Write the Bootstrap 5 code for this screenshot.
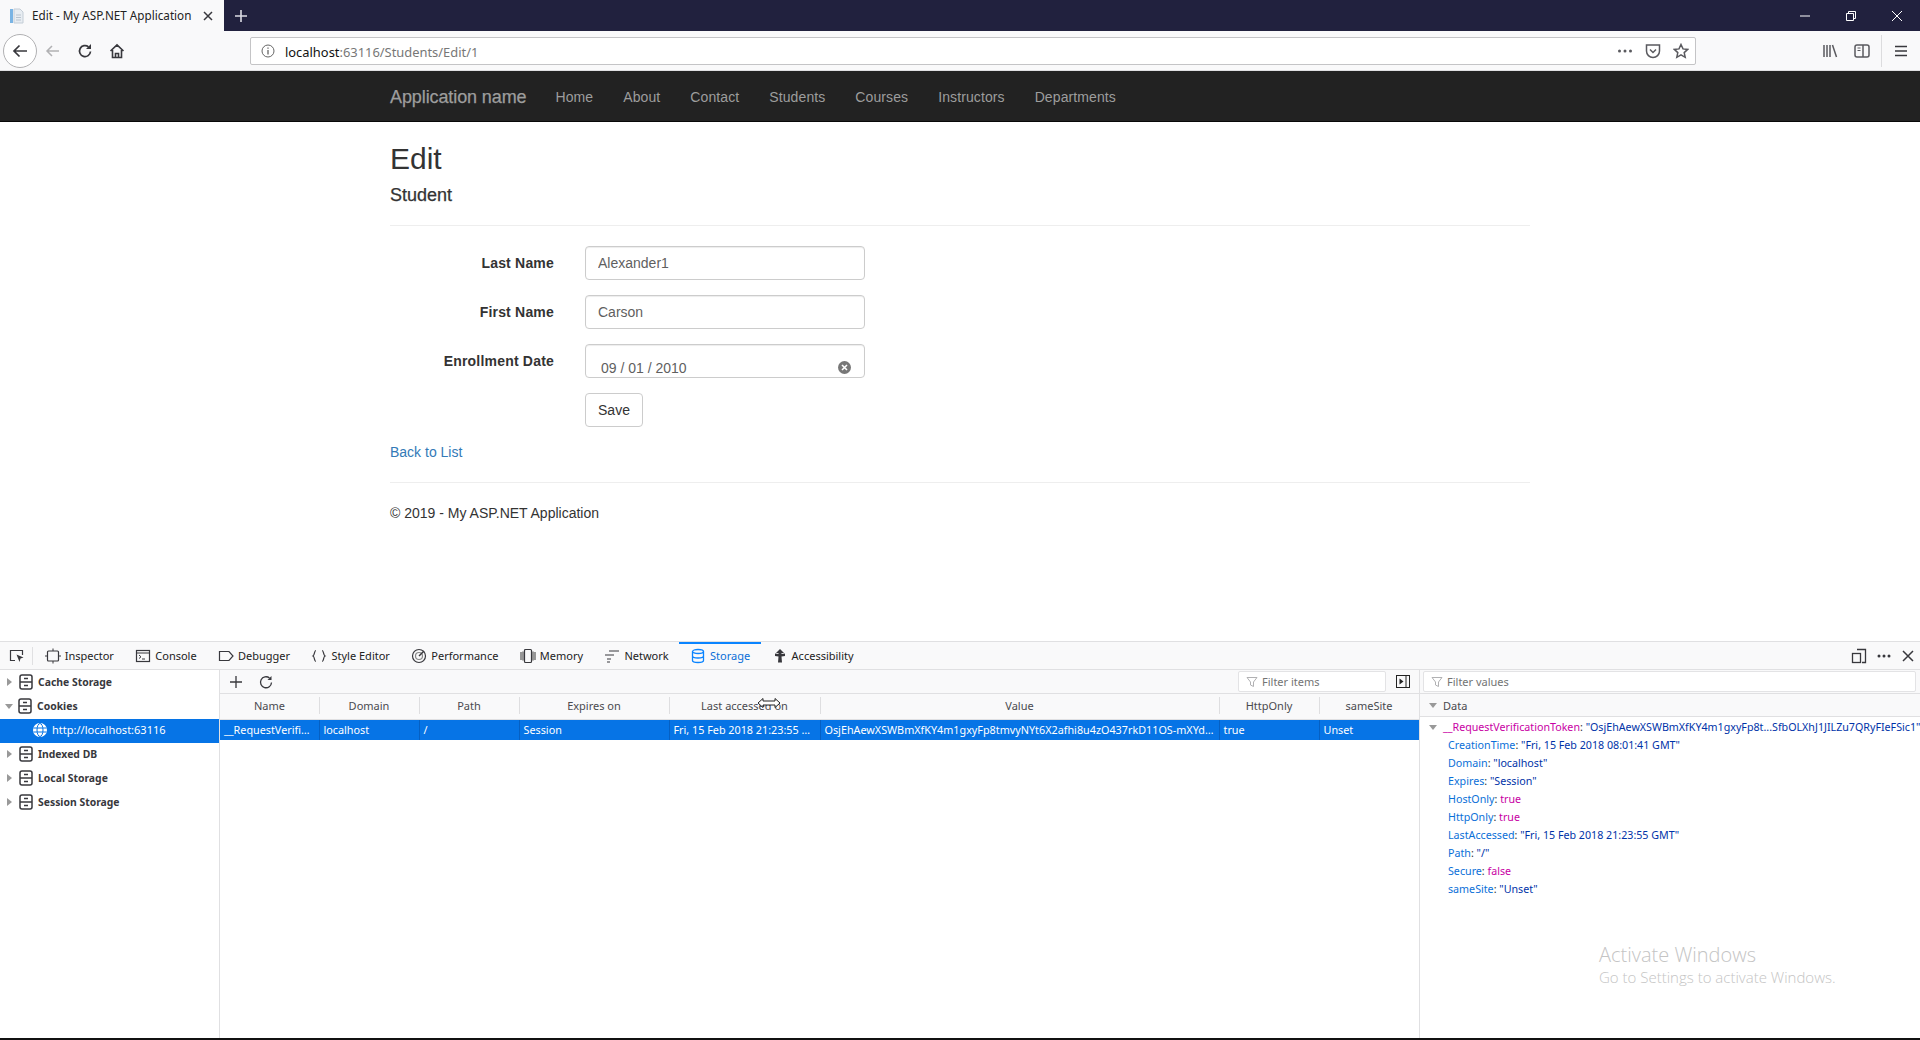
<!DOCTYPE html>
<html lang="en">
<head>
<meta charset="utf-8">
<title>Edit - My ASP.NET Application</title>
<link rel="stylesheet" href="https://cdn.jsdelivr.net/npm/bootstrap@5.3.0/dist/css/bootstrap.min.css">
<style>
html,body{height:100%}
body{width:1920px;height:1040px;overflow:hidden;font-family:"Liberation Sans",Arial,sans-serif;font-size:14px;line-height:20px;color:#333;background:#fff;display:flex;flex-direction:column;position:relative}
svg{display:block;flex:none}
.ui{font-family:"Noto Sans",sans-serif}
.titlebar{height:31px;background:#21213e;flex:none}
.browsertab{width:224px;background:#f9f9fa;color:#222;font-size:11.7px;padding:0 11px 0 9px}
.tabtitle{margin-left:7px;flex:1;white-space:nowrap;padding-bottom:2px}
.newtab{margin-left:9px}
.winbtns{margin-left:auto}
.winbtn{width:46px;height:31px}
.toolbar{height:40px;background:#f9f9fa;flex:none;border-bottom:1px solid #e0e0e2}
.tbbtn{width:32px;height:40px}
.backbtn{width:34px;height:34px;border:1px solid #b1b1b3;border-radius:50%;background:#fff;margin:0 0 0 3px}
.urlbar{width:1446px;height:28px;margin-left:117px;background:#fff;border:1px solid #c4c4c6;border-radius:2px;padding:0 0 0 10px;font-size:12.9px}
.urltext{padding-top:2px;margin-left:10px}
.urlhost{color:#111}
.urlrest{color:#777}
.urlact{width:28px;height:26px}
.tbright{margin-left:auto;padding-right:3px}
.tbdiv{width:1px;height:32px;background:#dcdcde;margin:0 3px}
.sitenav{height:51px;background:#222;border-bottom:1px solid #080808;padding:0;flex:none}
.sitewrap{width:1170px;margin:0 auto;padding:0 15px}
.sitenav .navbar-brand{font-size:18px;line-height:20px;color:#9d9d9d;padding:16px 0 15px;margin:0 14px 0 0;font-weight:400;letter-spacing:-.1px;-webkit-text-stroke:.25px #9d9d9d}
.sitenav .navbar-nav .nav-link{color:#9d9d9d;padding:16px 15px 15px;line-height:20px;font-size:14px;letter-spacing:.1px}
.webpage{height:519px;flex:none;overflow:hidden}
.pagetitle{font-size:30px;line-height:33px;margin:20px 0 10px;font-weight:500;color:#333}
.pagesub{font-size:18px;line-height:20px;margin:10px 0;font-weight:500;color:#333;-webkit-text-stroke:.25px #333}
.pagerule{border:0;border-top:1px solid #eee;opacity:1;margin:20px 0}
.fieldrow{margin-bottom:15px}
.fieldlabel{width:164px;margin:0 31px 0 0;text-align:right;font-weight:700;padding-top:7px;line-height:20px;font-size:14px;letter-spacing:.2px}
.fieldbox{width:280px;position:relative}
.fieldbox .form-control{height:34px;font-size:14px;line-height:20px;padding:6px 12px;border:1px solid #ccc;border-radius:4px;color:#5f5f5f;box-shadow:inset 0 1px 1px rgba(0,0,0,.075)}
.fieldbox .datectl{padding:13px 15px 0}
.dateclear{position:absolute;right:14px;top:17px}
.savebtn{margin-left:195px;height:34px;width:58px;font-size:14px;line-height:20px;padding:6px 12px;color:#333;background:#fff;border:1px solid #ccc;border-radius:4px}
.backlink{color:#337ab7;text-decoration:none}
.pagefoot{margin:0 0 10px}
.devtools{height:397px;flex:none;background:#fff;border-top:1px solid #e0e0e2;display:flex;flex-direction:column;font-size:11px;line-height:16px;color:#333}
.devtabs{height:28px;background:#f9f9fa;border-bottom:1px solid #e0e0e2;flex:none;color:#222}
.pickbtn{width:34px;height:27px;position:relative;padding-left:9px}
.pickbtn::after{content:"";position:absolute;right:1px;top:5px;height:18px;width:1px;background:#e0e0e2}
.devtab{height:27px;padding:0 10.7px;gap:4px;white-space:nowrap}
.devtab.on{color:#0a6fd8;border-top:2px solid #0a84ff;padding-bottom:2px}
.devright{margin-left:auto;gap:6px;padding-right:5px}
.devbody{flex:1;min-height:0}
.storetree{width:220px;border-right:1px solid #e0e0e2;flex:none;padding-top:1px}
.treerow{height:24px;font-weight:700;color:#38383d;font-size:10.4px;white-space:nowrap;padding:0 0 2px 5px;gap:4px}
.treerow>i{margin-right:2px}
.treerow.sel{background:#0674e6;color:#fff;font-weight:400;padding-left:32px;font-size:11px;gap:4px}
.twist{width:0;height:0;border-left:5px solid #999;border-top:4.5px solid transparent;border-bottom:4.5px solid transparent;margin:0 2px 0 2px}
.twist.open{border-left:4.5px solid transparent;border-right:4.5px solid transparent;border-top:5px solid #999;border-bottom:0;margin:0}
.tablepane{width:1200px;flex:none;border-right:1px solid #e0e0e2}
.tools{height:24px;background:#f9f9fa;border-bottom:1px solid #e0e0e2;padding-left:9px;gap:12px}
.filterbox{height:21px;background:#fff;border:1px solid #e3e3e5;border-radius:2px;color:#737373;font-size:11px;gap:4px;padding-left:7px}
.filteritems{width:148px;margin-left:auto}
.expandbtn{margin-right:9px;margin-left:-2px}
.cooktable{table-layout:fixed;width:1199px;margin:0;--bs-table-bg:transparent;font-size:11px;line-height:16px}
.cooktable th,.cooktable td{padding:0 4px;white-space:nowrap;overflow:hidden;text-overflow:ellipsis;border:0;font-weight:400;vertical-align:middle}
.cooktable th{height:25px;text-align:center;background:#f9f9fa;color:#4a4a4f;border-bottom:1px solid #e0e0e2;position:relative}
.cooktable th+th::before{content:"";position:absolute;left:0;top:3px;height:17px;width:1px;background:#dedee0}
.cooktable td{height:21px;background:#0674e6;color:#fff;border-left:1px solid #0560c4;font-size:10.8px}
.cooktable td:first-child{border-left:0}
.c1{width:99px}.c2,.c3,.c7,.c8{width:100px}.c4{width:150px}.c5{width:151px}.c6{width:399px}
.datapane{flex:1;min-width:0;position:relative;font-size:10.7px}
.paneltop{height:24px;background:#f9f9fa;border-bottom:1px solid #e0e0e2;padding:0 4px 0 3px}
.paneltop .filterbox{flex:1}
.datahead{height:23px;background:#f9f9fa;border-bottom:1px solid #e0e0e2;padding:1px 0 0 9px;gap:6px;font-size:11px;color:#4a4a4f}
.tokenrow{height:20px;padding-left:9px;gap:6px;white-space:nowrap}
.tokenrow>i{margin-right:-2px}
.proprow{height:18px;padding-left:28px;white-space:nowrap}
.pkey{color:#0a6fd8}
.pkeym{color:#c800a4}
.pstr{color:#0033a8}
.pbool{color:#c800a4}
.activate{position:absolute;left:1599px;top:942px;color:#c4c4c4;font-family:"Open Sans",sans-serif;font-weight:300;pointer-events:none}
.activate1{font-size:20px;line-height:26px}
.activate2{font-size:15px;line-height:18px}
.resizecursor{position:absolute;left:757px;top:697px}
.endbar{height:2px;background:#111;flex:none}
</style>
</head>
<body>
<svg width="0" height="0" style="position:absolute">
<symbol id="stor" viewBox="0 0 16 16"><rect x="2" y="1" width="12" height="14" rx="2" fill="none" stroke="#38383d" stroke-width="1.5"/><path d="M2 8h12M6 4.500h4M6 11.500h4" stroke="#38383d" stroke-width="1.300" fill="none"/></symbol>
<symbol id="funnel" viewBox="0 0 12 12"><path d="M1 1.500h10L7.500 6v4.500l-3-1.500V6z" fill="none" stroke="#b1b1b3"/></symbol>
</svg>

<div class="titlebar d-flex ui">
  <div class="browsertab d-flex align-items-center">
    <svg width="16" height="16" viewBox="0 0 16 16"><rect x="1" y="1" width="3" height="14" fill="#7ab4e4"/><path d="M5 1h6l3 3v11H5z" fill="#e8edf2" stroke="#c4cdd6"/><path d="M7 7h5M7 9.500h5M7 12h5" stroke="#b9c4cf"/></svg>
    <span class="tabtitle">Edit - My ASP.NET Application</span>
    <svg width="10" height="10" viewBox="0 0 10 10"><path d="M1 1l8 8M9 1l-8 8" stroke="#38383d" stroke-width="1.500"/></svg>
  </div>
  <svg class="newtab align-self-center" width="16" height="16" viewBox="0 0 16 16"><path d="M8 2v12M2 8h12" stroke="#dcdce4" stroke-width="1.600"/></svg>
  <div class="winbtns d-flex">
    <div class="winbtn d-flex align-items-center justify-content-center"><svg width="12" height="12" viewBox="0 0 12 12"><path d="M1 6h10" stroke="#fff"/></svg></div>
    <div class="winbtn d-flex align-items-center justify-content-center"><svg width="12" height="12" viewBox="0 0 12 12"><path d="M1.500 3.500h7v7h-7zM3.500 3.500v-2h7v7h-2" fill="none" stroke="#fff"/></svg></div>
    <div class="winbtn d-flex align-items-center justify-content-center"><svg width="12" height="12" viewBox="0 0 12 12"><path d="M1 1l10 10M11 1L1 11" stroke="#fff"/></svg></div>
  </div>
</div>

<div class="toolbar d-flex align-items-center ui">
  <div class="backbtn d-flex align-items-center justify-content-center"><svg width="18" height="18" viewBox="0 0 18 18"><path d="M16 9H3M8.500 3.500L3 9l5.500 5.500" fill="none" stroke="#38383d" stroke-width="1.700"/></svg></div>
  <div class="tbbtn d-flex align-items-center justify-content-center"><svg width="16" height="16" viewBox="0 0 16 16"><path d="M14 8H2M7 3L2 8l5 5" fill="none" stroke="#b1b1b3" stroke-width="1.500"/></svg></div>
  <div class="tbbtn d-flex align-items-center justify-content-center"><svg width="16" height="16" viewBox="0 0 16 16"><path d="M13.500 8.500A5.500 5.500 0 1 1 11.500 3.800" fill="none" stroke="#38383d" stroke-width="1.700"/><path d="M14 1v5H9z" fill="#38383d"/></svg></div>
  <div class="tbbtn d-flex align-items-center justify-content-center"><svg width="16" height="16" viewBox="0 0 16 16"><path d="M1.500 8L8 1.800 14.500 8M3.500 7v7.500h9V7M6.500 14.500v-4h3v4" fill="none" stroke="#38383d" stroke-width="1.600"/></svg></div>
  <div class="urlbar d-flex align-items-center">
    <svg width="14" height="14" viewBox="0 0 14 14"><circle cx="7" cy="7" r="6" fill="none" stroke="#666"/><path d="M7 6v4.500M7 3.500v1.200" stroke="#666" stroke-width="1.300"/></svg>
    <span class="urltext"><span class="urlhost">localhost</span><span class="urlrest">:63116/Students/Edit/1</span></span>
    <div class="ms-auto d-flex align-items-center">
      <div class="urlact d-flex align-items-center justify-content-center"><svg width="16" height="4" viewBox="0 0 16 4"><circle cx="2.500" cy="2" r="1.500" fill="#5a5a5f"/><circle cx="8" cy="2" r="1.500" fill="#5a5a5f"/><circle cx="13.500" cy="2" r="1.500" fill="#5a5a5f"/></svg></div>
      <div class="urlact d-flex align-items-center justify-content-center"><svg width="16" height="16" viewBox="0 0 16 16"><path d="M1.500 2h13v6a6.500 6.500 0 0 1-13 0z" fill="none" stroke="#5a5a5f" stroke-width="1.500"/><path d="M5 6.500l3 3 3-3" fill="none" stroke="#5a5a5f" stroke-width="1.500"/></svg></div>
      <div class="urlact d-flex align-items-center justify-content-center"><svg width="16" height="16" viewBox="0 0 16 16"><path d="M8 1.500l2 4.400 4.700.5-3.500 3.200 1 4.700L8 11.900 3.800 14.300l1-4.700L1.300 6.400 6 5.900z" fill="none" stroke="#5a5a5f" stroke-width="1.500"/></svg></div>
    </div>
  </div>
  <div class="tbright d-flex align-items-center">
    <div class="tbbtn d-flex align-items-center justify-content-center"><svg width="16" height="16" viewBox="0 0 16 16"><path d="M2 2v12M5 2v12M8 2v12M10.500 2l4 12" stroke="#5a5a5f" stroke-width="1.500"/></svg></div>
    <div class="tbbtn d-flex align-items-center justify-content-center"><svg width="16" height="16" viewBox="0 0 16 16"><rect x="1" y="2" width="14" height="12" rx="2" fill="none" stroke="#5a5a5f" stroke-width="1.500"/><path d="M9 2v12" stroke="#5a5a5f" stroke-width="1.500"/><path d="M3.500 5h3M3.500 7.500h3" stroke="#5a5a5f"/></svg></div>
    <div class="tbdiv"></div>
    <div class="tbbtn d-flex align-items-center justify-content-center"><svg width="14" height="14" viewBox="0 0 14 14"><path d="M1 2.500h12M1 7h12M1 11.500h12" stroke="#38383d" stroke-width="1.700"/></svg></div>
  </div>
</div>

<nav class="navbar navbar-expand sitenav">
  <div class="sitewrap d-flex align-items-center">
    <a class="navbar-brand" href="#">Application name</a>
    <ul class="navbar-nav">
      <li class="nav-item"><a class="nav-link" href="#">Home</a></li>
      <li class="nav-item"><a class="nav-link" href="#">About</a></li>
      <li class="nav-item"><a class="nav-link" href="#">Contact</a></li>
      <li class="nav-item"><a class="nav-link" href="#">Students</a></li>
      <li class="nav-item"><a class="nav-link" href="#">Courses</a></li>
      <li class="nav-item"><a class="nav-link" href="#">Instructors</a></li>
      <li class="nav-item"><a class="nav-link" href="#">Departments</a></li>
    </ul>
  </div>
</nav>

<main class="webpage">
  <div class="sitewrap">
    <h2 class="pagetitle">Edit</h2>
    <h4 class="pagesub">Student</h4>
    <hr class="pagerule">
    <form>
      <div class="fieldrow d-flex"><label class="fieldlabel">Last Name</label><div class="fieldbox"><input class="form-control" value="Alexander1"></div></div>
      <div class="fieldrow d-flex"><label class="fieldlabel">First Name</label><div class="fieldbox"><input class="form-control" value="Carson"></div></div>
      <div class="fieldrow d-flex"><label class="fieldlabel">Enrollment Date</label><div class="fieldbox"><input class="form-control datectl" value="09 / 01 / 2010">
        <svg class="dateclear" width="13" height="13" viewBox="0 0 13 13"><circle cx="6.500" cy="6.500" r="6.500" fill="#777"/><path d="M4 4l5 5M9 4l-5 5" stroke="#fff" stroke-width="1.600"/></svg></div></div>
      <div class="fieldrow"><button type="button" class="btn savebtn">Save</button></div>
    </form>
    <div><a class="backlink" href="#">Back to List</a></div>
    <hr class="pagerule">
    <p class="pagefoot">© 2019 - My ASP.NET Application</p>
  </div>
</main>

<section class="devtools ui">
  <div class="devtabs d-flex align-items-center">
    <div class="pickbtn d-flex align-items-center"><svg width="16" height="16" viewBox="0 0 16 16"><path d="M6 12.500H1.500v-10h12V7" fill="none" stroke="#38383d" stroke-width="1.200"/><path d="M7.500 6.500l7 3-3 1-1 3.500z" fill="#38383d"/></svg></div>
    <div class="devtab d-flex align-items-center"><svg width="16" height="16" viewBox="0 0 16 16"><rect x="2.500" y="3" width="11" height="10" rx="1" fill="none" stroke="#38383d" stroke-width="1.200"/><path d="M8 .5v2.500M8 13v2.500M0 8h2.500M13.500 8H16" stroke="#38383d"/></svg><span>Inspector</span></div>
    <div class="devtab d-flex align-items-center"><svg width="16" height="16" viewBox="0 0 16 16"><rect x="1.500" y="2.500" width="13" height="11" fill="none" stroke="#38383d" stroke-width="1.200"/><path d="M1.500 5h13M4 7l2 1.800L4 10.500M7 11h3" fill="none" stroke="#38383d"/></svg><span>Console</span></div>
    <div class="devtab d-flex align-items-center"><svg width="16" height="16" viewBox="0 0 16 16"><path d="M1.500 3.500h9.500L15 8l-4 4.500H1.500z" fill="none" stroke="#38383d" stroke-width="1.200"/></svg><span>Debugger</span></div>
    <div class="devtab d-flex align-items-center"><svg width="16" height="16" viewBox="0 0 16 16"><path d="M5 2.500C3 2.500 4 7 2 8c2 1 1 5.500 3 5.500M11 2.500c2 0 1 4.500 3 5.500-2 1-1 5.500-3 5.500" fill="none" stroke="#38383d" stroke-width="1.200"/></svg><span>Style Editor</span></div>
    <div class="devtab d-flex align-items-center"><svg width="16" height="16" viewBox="0 0 16 16"><circle cx="8" cy="8" r="6.500" fill="none" stroke="#38383d" stroke-width="1.200"/><circle cx="8" cy="8" r="3.500" fill="none" stroke="#888" stroke-width="1.200"/><path d="M8 8l5-5" stroke="#38383d" stroke-width="1.400"/></svg><span>Performance</span></div>
    <div class="devtab d-flex align-items-center"><svg width="16" height="16" viewBox="0 0 16 16"><rect x="4.500" y="1.500" width="7" height="13" rx="1" fill="none" stroke="#38383d" stroke-width="1.200"/><path d="M1 4v8M3 3.500v9M13 3.500v9M15 4v8" stroke="#555" stroke-width="1.200"/></svg><span>Memory</span></div>
    <div class="devtab d-flex align-items-center"><svg width="16" height="16" viewBox="0 0 16 16"><path d="M5 3h10M1 7h9M3 11h4M3 14h3" stroke="#38383d" stroke-width="1.100"/></svg><span>Network</span></div>
    <div class="devtab on d-flex align-items-center"><svg width="16" height="16" viewBox="0 0 16 16"><ellipse cx="8" cy="3.500" rx="5.500" ry="2" fill="none" stroke="#0a84ff" stroke-width="1.300"/><path d="M2.500 3.500v9c0 1.100 2.500 2 5.500 2s5.500-.9 5.500-2v-9M2.500 8c0 1.100 2.500 2 5.500 2s5.500-.9 5.500-2" fill="none" stroke="#0a84ff" stroke-width="1.300"/></svg><span>Storage</span></div>
    <div class="devtab d-flex align-items-center"><svg width="16" height="16" viewBox="0 0 16 16"><path d="M8 1L4 5h2.500v1L3 5.500 3 8l3.500.5L6 14.500h4l-.5-6L13 8V5.500L9.500 6V5H12z" fill="#38383d"/></svg><span>Accessibility</span></div>
    <div class="devright d-flex align-items-center">
      <svg width="16" height="16" viewBox="0 0 16 16"><path d="M6 1.500h8.500v13H11" fill="none" stroke="#38383d" stroke-width="1.300"/><rect x="1.500" y="5.500" width="8" height="9" fill="none" stroke="#38383d" stroke-width="1.300"/></svg>
      <svg width="22" height="16" viewBox="0 0 22 16"><circle cx="6" cy="8" r="1.500" fill="#38383d"/><circle cx="11" cy="8" r="1.500" fill="#38383d"/><circle cx="16" cy="8" r="1.500" fill="#38383d"/></svg>
      <svg width="14" height="14" viewBox="0 0 14 14"><path d="M2 2l10 10M12 2L2 12" stroke="#38383d" stroke-width="1.500"/></svg>
    </div>
  </div>

  <div class="devbody d-flex">
    <div class="storetree">
      <div class="treerow d-flex align-items-center"><i class="twist"></i><svg width="16" height="16"><use href="#stor"/></svg><span>Cache Storage</span></div>
      <div class="treerow d-flex align-items-center"><i class="twist open"></i><svg width="16" height="16"><use href="#stor"/></svg><span>Cookies</span></div>
      <div class="treerow sel d-flex align-items-center"><svg width="16" height="16" viewBox="0 0 16 16"><circle cx="8" cy="8" r="7" fill="#fff"/><ellipse cx="8" cy="8" rx="3" ry="6.500" fill="none" stroke="#0674e6"/><path d="M1.500 6h13M1.500 10h13" stroke="#0674e6"/></svg><span>http://localhost:63116</span></div>
      <div class="treerow d-flex align-items-center"><i class="twist"></i><svg width="16" height="16"><use href="#stor"/></svg><span>Indexed DB</span></div>
      <div class="treerow d-flex align-items-center"><i class="twist"></i><svg width="16" height="16"><use href="#stor"/></svg><span>Local Storage</span></div>
      <div class="treerow d-flex align-items-center"><i class="twist"></i><svg width="16" height="16"><use href="#stor"/></svg><span>Session Storage</span></div>
    </div>

    <div class="tablepane">
      <div class="tools d-flex align-items-center">
        <svg width="14" height="14" viewBox="0 0 14 14"><path d="M7 1v12M1 7h12" stroke="#38383d" stroke-width="1.300"/></svg>
        <svg class="ms-1" width="14" height="14" viewBox="0 0 14 14"><path d="M12.500 7.500A5.500 5.500 0 1 1 10.500 3" fill="none" stroke="#38383d" stroke-width="1.300"/><path d="M12.500 1v4h-4z" fill="#38383d"/></svg>
        <div class="filterbox filteritems d-flex align-items-center"><svg width="12" height="12"><use href="#funnel"/></svg><span>Filter items</span></div>
        <svg class="expandbtn" width="14" height="13" viewBox="0 0 14 13"><rect x=".5" y=".5" width="13" height="12" fill="none" stroke="#222"/><path d="M10 .5v12" stroke="#222"/><path d="M3.500 3.500l4 3-4 3z" fill="#222"/></svg>
      </div>
      <table class="table cooktable">
        <colgroup><col class="c1"><col class="c2"><col class="c3"><col class="c4"><col class="c5"><col class="c6"><col class="c7"><col class="c8"></colgroup>
        <thead><tr><th>Name</th><th>Domain</th><th>Path</th><th>Expires on</th><th>Last accessed on</th><th>Value</th><th>HttpOnly</th><th>sameSite</th></tr></thead>
        <tbody><tr><td>__RequestVerificationToken</td><td>localhost</td><td>/</td><td>Session</td><td>Fri, 15 Feb 2018 21:23:55 GMT</td><td>OsjEhAewXSWBmXfKY4m1gxyFp8tmvyNYt6X2afhi8u4zO437rkD11OS-mXYdDnSfbOLXhJ1JILZu7QRyFIeFSic1</td><td>true</td><td>Unset</td></tr></tbody>
      </table>
    </div>

    <div class="datapane">
      <div class="paneltop d-flex align-items-center"><div class="filterbox d-flex align-items-center"><svg width="12" height="12"><use href="#funnel"/></svg><span>Filter values</span></div></div>
      <div class="datahead d-flex align-items-center"><i class="twist open"></i><span>Data</span></div>
      <div class="tokenrow d-flex align-items-center"><i class="twist open"></i><span><span class="pkeym">__RequestVerificationToken</span>: <span class="pstr">"OsjEhAewXSWBmXfKY4m1gxyFp8t...SfbOLXhJ1JILZu7QRyFIeFSic1"</span></span></div>
      <div class="proprow"><span class="pkey">CreationTime</span>: <span class="pstr">"Fri, 15 Feb 2018 08:01:41 GMT"</span></div>
      <div class="proprow"><span class="pkey">Domain</span>: <span class="pstr">"localhost"</span></div>
      <div class="proprow"><span class="pkey">Expires</span>: <span class="pstr">"Session"</span></div>
      <div class="proprow"><span class="pkey">HostOnly</span>: <span class="pbool">true</span></div>
      <div class="proprow"><span class="pkey">HttpOnly</span>: <span class="pbool">true</span></div>
      <div class="proprow"><span class="pkey">LastAccessed</span>: <span class="pstr">"Fri, 15 Feb 2018 21:23:55 GMT"</span></div>
      <div class="proprow"><span class="pkey">Path</span>: <span class="pstr">"/"</span></div>
      <div class="proprow"><span class="pkey">Secure</span>: <span class="pbool">false</span></div>
      <div class="proprow"><span class="pkey">sameSite</span>: <span class="pstr">"Unset"</span></div>
    </div>
  </div>
</section>
<div class="endbar"></div>

<div class="activate"><div class="activate1">Activate Windows</div><div class="activate2">Go to Settings to activate Windows.</div></div>
<svg class="resizecursor" width="24" height="12" viewBox="0 0 24 12"><path d="M1 6l5-4.500V4h12V1.500L23 6l-5 4.500V8H6v2.500z" fill="#fff" stroke="#222"/></svg>
<script src="https://cdn.jsdelivr.net/npm/bootstrap@5.3.0/dist/js/bootstrap.bundle.min.js"></script>
</body>
</html>
